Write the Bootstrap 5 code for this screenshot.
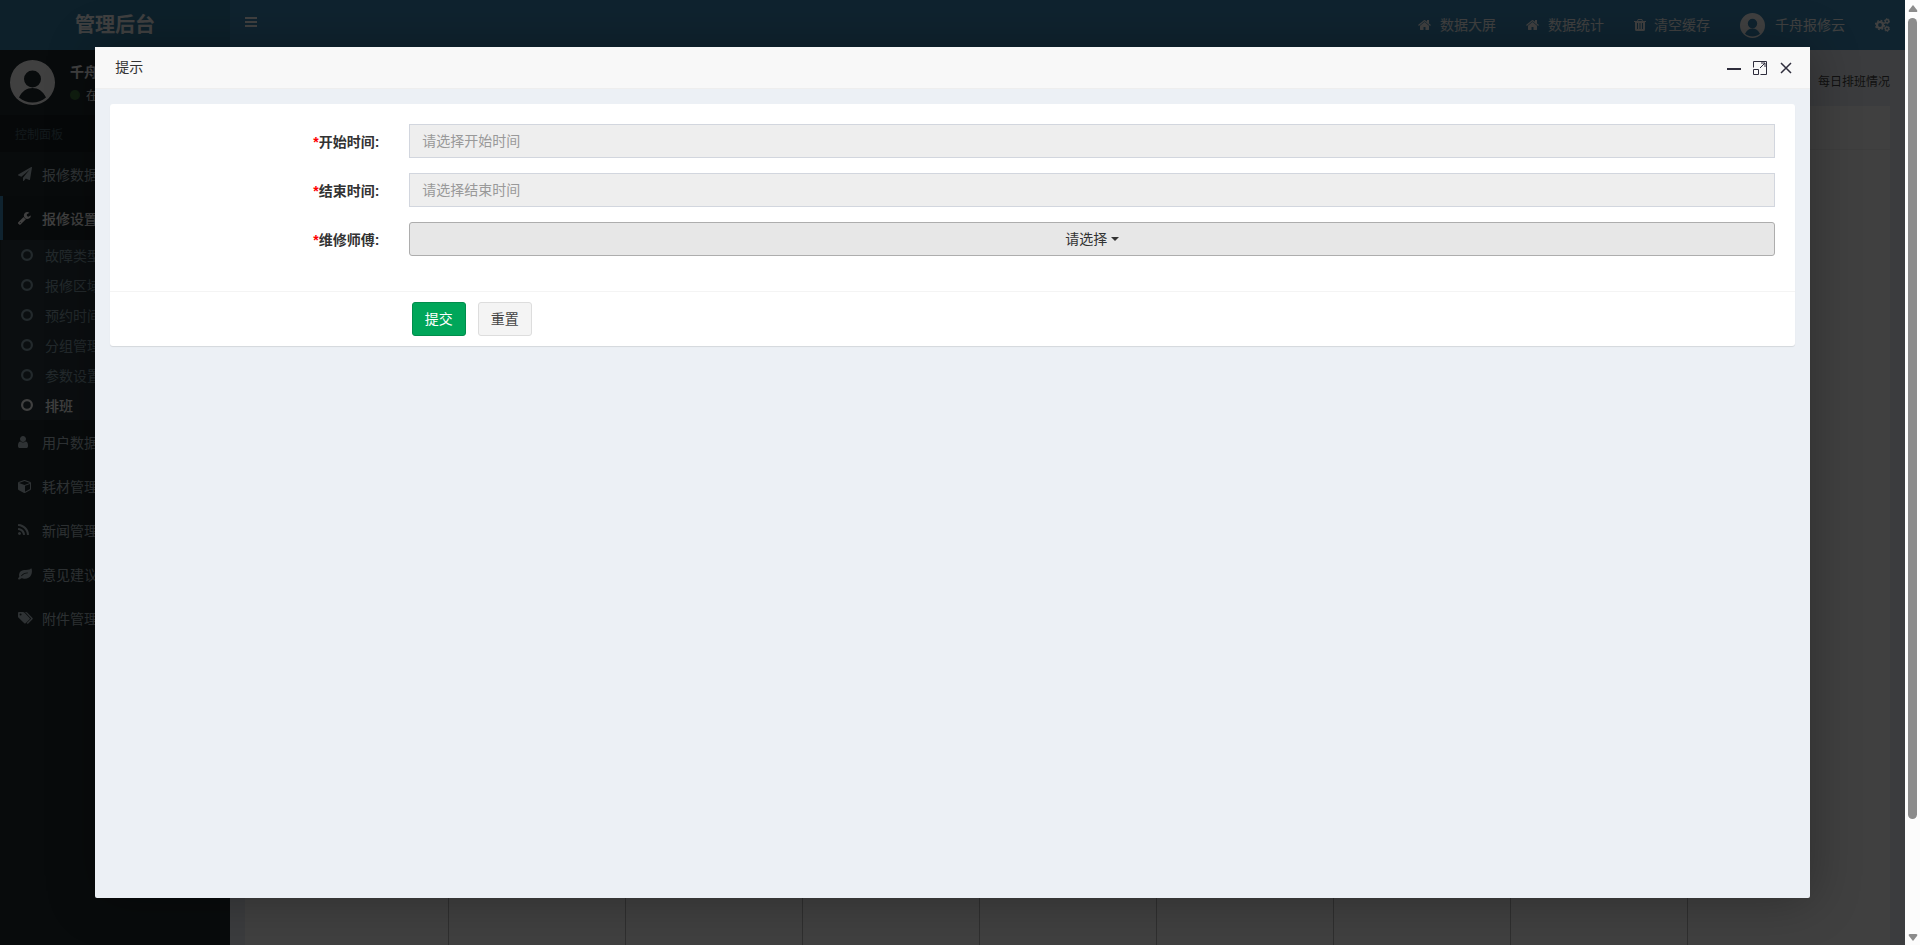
<!DOCTYPE html>
<html lang="zh-CN">
<head>
<meta charset="utf-8">
<meta name="viewport" content="width=device-width, initial-scale=1">
<title>管理后台</title>
<link href="https://cdn.jsdelivr.net/npm/bootstrap@5.3.0/dist/css/bootstrap.min.css" rel="stylesheet">
<style>
  body { font: 14px/20px "Liberation Sans", "Noto Sans CJK SC", sans-serif; color: #333; }
  a { text-decoration: none; color: inherit; }
  .ico { height: 14px; width: auto; fill: currentColor; display: block; flex: none; }

  /* top bar */
  .topbar { height: 50px; background: #3c8dbc; color: #fff; }
  .side-w { width: 230px; flex: none; }
  .brand { background: #367fa9; font-size: 20px; font-weight: 700; }
  .burger { padding: 0 15px 2px; border: 0; background: none; color: #fff; }
  .topbar .item { padding: 0 15px; gap: 8px; }
  .topbar .item.who { gap: 10px; }

  /* sidebar */
  .sidebar { background: #222d32; color: #b8c7ce; font-family: "Noto Sans CJK SC", sans-serif; }
  .who-panel { padding: 10px; gap: 15px; height: 65px; color: #fff; }
  .who-panel small { font-size: 12px; line-height: 18px; gap: 6px; }
  .online { width: 10px; height: 10px; border-radius: 50%; background: #3c763d; }
  .side-title { background: #1a2226; color: #4b646f; font-size: 12px; line-height: 17px; padding: 10px 15px; }
  .menu a { padding: 12px 0 12px 15px; border-left: 3px solid transparent; white-space: nowrap; }
  .menu .cell { width: 24px; flex: none; }
  .menu a.on { background: #1e282c; border-color: #3c8dbc; color: #fff; font-weight: 500; }
  .submenu { background: #2c3b41; margin: 0 1px; padding-left: 5px; color: #8aa4af; }
  .submenu a { padding: 5px 0 5px 15px; border: 0; }
  .submenu a.here { color: #fff; font-weight: 500; }

  /* page behind the dialog */
  .page { background: #ecf0f5; padding: 0 15px; }
  .crumb { height: 56px; padding-top: 26px; font-size: 12px; color: #444; }
  .sheet { background: #fff; }
  .sheet-head { height: 44px; border-bottom: 1px solid #f4f4f4; }
  .days { padding: 0 26px 0 27px; }
  .days div + div { border-left: 1px solid #bbb; }

  /* dialog */
  .shade { background: rgba(0,0,0,.75); }
  .dialog-box { width: 90%; height: 90%; background: #ecf0f5; box-shadow: 1px 1px 50px rgba(0,0,0,.3); border-radius: 2px; }
  .dialog-bar { height: 42px; background: #f8f8f8; border-bottom: 1px solid #eee; padding: 0 17px 1px 20px; }
  .dialog-bar button { padding: 0; border: 0; background: none; color: #2e2d3c; }
  .dialog-bar svg { display: block; }
  .panel-box { margin: 15px; background: #fff; border-radius: 3px; box-shadow: 0 1px 1px rgba(0,0,0,.1); }
  .panel-body { padding: 20px; }
  .panel-body .row { --bs-gutter-x: 30px; margin-bottom: 15px; }
  .panel-foot { border-top: 1px solid #f4f4f4; padding: 10px 19px; }
  .field-name { font-weight: 700; text-align: right; padding-top: 8px; }
  .field-name i { color: red; font-style: normal; }
  .form-control, .form-control:focus { height: 34px; padding: 6px 12px; font-size: 14px; line-height: 20px; border: 1px solid #d2d6de; border-radius: 0; background: #eee; box-shadow: none; }
  .form-control::placeholder { color: #999; }
  .btn { height: 34px; padding: 6px 12px; font-size: 14px; line-height: 20px; border-radius: 3px; }
  .btn-pick, .btn-pick:hover { background: #e7e7e7; border-color: #adadad; color: #333; }
  .btn-ok, .btn-ok:hover { background: #00a65a; border-color: #008d4c; color: #fff; }
  .btn-plain, .btn-plain:hover { background: #f4f4f4; border-color: #ddd; color: #444; }

  /* scroll strip */
  .strip { width: 15px; flex: none; background: #fcfcfc; color: #8b8b8b; padding: 5px 0 4px; gap: 6px; }
  .strip svg { fill: currentColor; }
  .strip-track { width: 9px; }
  .strip-thumb { height: 88%; background: #8b8b8b; border-radius: 5px; }
</style>
</head>
<body class="d-flex vh-100 overflow-hidden">

<svg width="0" height="0" class="position-absolute">
  <symbol id="home" viewBox="0 0 1664 1792"><path d="M1408 992v480q0 26-19 45t-45 19H960v-384H704v384H320q-26 0-45-19t-19-45V992q0-1 .5-3t.5-3l575-474 575 474q1 2 1 6zm223-69l-62 74q-8 9-21 11h-3q-13 0-21-7L832 424l-692 577q-12 8-24 7-13-2-21-11l-62-74q-8-10-7-23.500t11-21.500l719-599q32-26 76-26t76 26l244 204V288q0-14 9-23t23-9h192q14 0 23 9t9 23v408l219 182q10 8 11 21.500t-7 23.500z"/></symbol>
  <symbol id="ring" viewBox="0 0 12 14"><circle cx="6" cy="7" r="4.900" fill="none" stroke="currentColor" stroke-width="2.200"/></symbol>
  <symbol id="face" viewBox="0 0 45 45"><path fill-rule="evenodd" d="M22.500 0a22.500 22.500 0 1 0 0 45a22.500 22.500 0 1 0 0-45zM22.500 10.500a8.500 8.500 0 1 1 0 17a8.500 8.500 0 1 1 0-17zM9 37.500C12 31 17 28 22.500 28S33 31 36 37.500C32 41 27.500 42.500 22.500 42.500S13 41 9 37.500z"/></symbol>
</svg>

<div class="position-relative d-flex flex-column flex-grow-1 overflow-hidden">

  <header class="topbar d-flex flex-shrink-0">
    <a href="#" class="brand side-w d-flex align-items-center justify-content-center">管理后台</a>
    <button class="burger d-flex align-items-center" aria-label="菜单"><svg class="ico" viewBox="0 0 12 14"><path d="M0 0h12v2H0zM0 4h12v2H0zM0 8h12v2H0z"/></svg></button>
    <nav class="d-flex ms-auto">
      <a href="#" class="item d-flex align-items-center"><svg class="ico" viewBox="0 0 14 14"><use href="#home" width="13" height="14"/></svg>数据大屏</a>
      <a href="#" class="item d-flex align-items-center"><svg class="ico" viewBox="0 0 14 14"><use href="#home" width="13" height="14"/></svg>数据统计</a>
      <a href="#" class="item d-flex align-items-center"><svg class="ico" viewBox="0 0 12 14"><path fill-rule="evenodd" d="M4 1h4l1 2h3v1h-1v7.500a1.500 1.500 0 0 1-1.500 1.500h-7A1.500 1.500 0 0 1 1 11.500V4H0V3h3zM4.500 2L4 3h4l-.5-1zM3 5v6h1V5zm2.500 0v6h1V5zM8 5v6h1V5z"/></svg>清空缓存</a>
      <a href="#" class="item who d-flex align-items-center"><svg width="25" height="25" fill="currentColor"><use href="#face"/></svg>千舟报修云</a>
      <a href="#" class="item d-flex align-items-center" aria-label="设置"><svg class="ico" viewBox="0 0 15 14"><g fill="none" stroke="currentColor"><circle cx="5" cy="7" r="3" stroke-width="2.200"/><circle cx="5" cy="7" r="4.500" stroke-width="1.400" stroke-dasharray="1.770 1.770"/><circle cx="12" cy="3.200" r="1.700" stroke-width="1.500"/><circle cx="12" cy="3.200" r="2.600" stroke-dasharray="1.360 1.360"/><circle cx="12" cy="10.800" r="1.700" stroke-width="1.500"/><circle cx="12" cy="10.800" r="2.600" stroke-dasharray="1.360 1.360"/></g></svg></a>
    </nav>
  </header>

  <div class="d-flex flex-grow-1">
    <aside class="sidebar side-w">
      <div class="who-panel d-flex">
        <svg width="45" height="45" fill="currentColor"><use href="#face"/></svg>
        <div>
          <div class="fw-bold mb-1 pt-1 lh-1">千舟报修云</div>
          <small class="d-flex align-items-center pt-1"><span class="online"></span>在线</small>
        </div>
      </div>
      <div class="side-title">控制面板</div>
      <nav class="menu">
        <a href="#" class="d-flex align-items-center"><span class="cell"><svg class="ico" viewBox="0 0 1792 1792"><path d="M1764 11q33 24 27 64l-256 1536q-5 29-32 45-14 8-31 8-11 0-24-5l-453-185-242 295q-18 23-49 23-13 0-22-4-19-7-30.500-23.500T640 1728v-349l864-1059-1069 925-395-162q-37-14-40-55-2-40 32-59L1696 9q15-9 32-9 20 0 36 11z"/></svg></span>报修数据</a>
        <a href="#" class="on d-flex align-items-center"><span class="cell"><svg class="ico" viewBox="85 0 1792 1792"><path fill-rule="evenodd" d="M448 1472q0-26-19-45t-45-19-45 19-19 45 19 45 45 19 45-19 19-45zm644-420l-682 682q-37 37-90 37-52 0-91-37L123 1626q-38-36-38-90 0-53 38-91l681-681q39 98 114.500 173.500T1092 1052zm634-435q0 39-23 106-47 134-164.500 217.500T1280 1024q-185 0-316.500-131.500T832 576t131.500-316.500T1280 128q58 0 121.500 16.500T1509 191q16 11 16 28t-16 28l-293 169v224l193 107q5-3 79-48.500t135.500-81T1694 582q15 0 23.500 10t8.500 25z"/></svg></span>报修设置</a>
        <div class="submenu">
          <a href="#" class="d-flex align-items-center"><span class="cell"><svg class="ico" viewBox="0 0 12 14"><use href="#ring"/></svg></span>故障类型</a>
          <a href="#" class="d-flex align-items-center"><span class="cell"><svg class="ico" viewBox="0 0 12 14"><use href="#ring"/></svg></span>报修区域</a>
          <a href="#" class="d-flex align-items-center"><span class="cell"><svg class="ico" viewBox="0 0 12 14"><use href="#ring"/></svg></span>预约时间</a>
          <a href="#" class="d-flex align-items-center"><span class="cell"><svg class="ico" viewBox="0 0 12 14"><use href="#ring"/></svg></span>分组管理</a>
          <a href="#" class="d-flex align-items-center"><span class="cell"><svg class="ico" viewBox="0 0 12 14"><use href="#ring"/></svg></span>参数设置</a>
          <a href="#" class="here d-flex align-items-center"><span class="cell"><svg class="ico" viewBox="0 0 12 14"><use href="#ring"/></svg></span>排班</a>
        </div>
        <a href="#" class="d-flex align-items-center"><span class="cell"><svg class="ico" viewBox="256 0 1280 1792"><path d="M1536 1399q0 109-62.500 187t-150.500 78H469q-88 0-150.500-78T256 1399q0-85 8.500-160.500t31.500-152 58.500-131 94-89T583 832q131 128 313 128t313-128q76 0 134.500 34.500t94 89 58.500 131 31.500 152 8.500 160.500zm-256-887q0 159-112.500 271.500T896 896 624.500 783.500 512 512t112.500-271.500T896 128t271.500 112.500T1280 512z"/></svg></span>用户数据</a>
        <a href="#" class="d-flex align-items-center"><span class="cell"><svg class="ico" viewBox="0 0 1664 1792"><path fill-rule="evenodd" d="M896 1629l640-349V644l-640 233v752zm-64-865l698-254-698-254-698 254zM1664 512v768q0 35-18 65t-49 47l-704 384q-28 16-61 16t-61-16L67 1392q-31-17-49-47t-18-65V512q0-40 23-73t61-47l704-256q22-8 44-8t44 8l704 256q38 14 61 47t23 73z"/></svg></span>耗材管理</a>
        <a href="#" class="d-flex align-items-center"><span class="cell"><svg class="ico" viewBox="0 0 1408 1792"><path d="M384 1344q0 80-56 136t-136 56-136-56-56-136 56-136 136-56 136 56 56 136zm512 123q2 28-17 48-18 21-47 21H697q-25 0-43-16.500t-20-41.500q-22-229-184.500-391.500T58 902q-25-2-41.500-20T0 839V704q0-29 21-47 17-17 43-17h5q160 13 306 80.500T634 902q114 113 181.500 259t80.500 306zm512 2q2 27-18 47-18 20-46 20h-143q-26 0-44.500-17.500T1137 1476q-12-215-101-408.500t-231.500-336-336-231.500T60 398q-25-1-42.500-19.500T0 335V192q0-28 20-46 18-18 44-18h3q262 13 501.500 120T994 542q187 186 294 425.500t120 501.500z"/></svg></span>新闻管理</a>
        <a href="#" class="d-flex align-items-center"><span class="cell"><svg class="ico" viewBox="0 0 14 14"><path fill-rule="evenodd" d="M13.500 1.500c.7 2 .6 4.500-.4 6.500-1.200 2.500-3.600 3.800-6.200 3.800-1.400 0-2.400-.6-3.400-.6-.9 0-1.400 1.300-2.200 1.300-.7 0-1.200-.6-1.200-1.100 0-.8 1.200-1.500 1.200-2C1 8.500 1 8 1.100 7.300 1.400 4.800 3.600 3.400 6 3.100c2.500-.3 5.300.2 7-1.600zM3.500 9.200C5.500 7.200 7 6.500 9.800 6.300V5.500C7 5.600 5 6.600 3 8.700z"/></svg></span>意见建议</a>
        <a href="#" class="d-flex align-items-center"><span class="cell"><svg class="ico" viewBox="0 0 15 14"><path fill-rule="evenodd" d="M0 2a1 1 0 0 1 1-1h4q.7 0 1.300.6l5.300 5.300q.6.6 0 1.300l-4 4q-.7.600-1.300 0L.6 6.800Q0 6.200 0 5.500zM2.600 2.500a1 1 0 1 0 0 2a1 1 0 1 0 0-2zM7 1h.9q.7 0 1.300.6l5.300 5.300q.6.6 0 1.300l-4.200 4.200q-.7.500-1.200 0l-.4-.4 4-4q.5-.5 0-1.100z"/></svg></span>附件管理</a>
      </nav>
    </aside>

    <main class="page d-flex flex-column flex-grow-1">
      <div class="crumb text-end lh-1">每日排班情况</div>
      <div class="sheet d-flex flex-column flex-grow-1">
        <div class="sheet-head"></div>
        <div class="days d-flex flex-grow-1">
          <div class="col"></div><div class="col"></div><div class="col"></div><div class="col"></div><div class="col"></div><div class="col"></div><div class="col"></div><div class="col"></div><div class="col"></div>
        </div>
      </div>
    </main>
  </div>

  <div class="shade position-absolute top-0 start-0 w-100 h-100 d-flex align-items-center justify-content-center">
    <section class="dialog-box" role="dialog" aria-label="提示">
      <div class="dialog-bar d-flex align-items-center">
        <span class="me-auto">提示</span>
        <div class="d-flex align-items-center gap-2">
          <button aria-label="最小化"><svg width="18" height="16"><path fill="currentColor" d="M0 9h14v2H0z"/></svg></button>
          <button aria-label="最大化"><svg width="18" height="16" viewBox="0 0 18 16" fill="none" stroke="currentColor"><path d="M.5 8.500v-6h13v13h-6M.5 10.500h5v5h-5zM7 9l5-5M8 4h4v4"/></svg></button>
          <button aria-label="关闭"><svg width="14" height="16" fill="none" stroke="currentColor" stroke-width="1.500"><path d="M2 4l10 10M12 4L2 14"/></svg></button>
        </div>
      </div>

      <form class="panel-box">
        <div class="panel-body">
          <div class="row">
            <label class="col-2 field-name" for="begin"><i>*</i>开始时间:</label>
            <div class="col-10"><input id="begin" class="form-control" placeholder="请选择开始时间" readonly></div>
          </div>
          <div class="row">
            <label class="col-2 field-name" for="finish"><i>*</i>结束时间:</label>
            <div class="col-10"><input id="finish" class="form-control" placeholder="请选择结束时间" readonly></div>
          </div>
          <div class="row">
            <label class="col-2 field-name" for="worker"><i>*</i>维修师傅:</label>
            <div class="col-10"><button id="worker" type="button" class="btn btn-pick dropdown-toggle w-100" data-bs-toggle="dropdown">请选择</button></div>
          </div>
        </div>
        <div class="panel-foot">
          <div class="d-flex gap-2">
            <div class="col-2"></div>
            <button type="submit" class="btn btn-ok me-1">提交</button>
            <button type="reset" class="btn btn-plain">重置</button>
          </div>
        </div>
      </form>
    </section>
  </div>
</div>

<div class="strip d-flex flex-column align-items-center" aria-hidden="true">
  <svg width="10" height="7"><path d="M5 0l4 5q1 2-1 2H2Q0 7 1 5z"/></svg>
  <div class="strip-track flex-grow-1"><div class="strip-thumb"></div></div>
  <svg width="10" height="7"><path d="M5 7l4-5q1-2-1-2H2Q0 0 1 2z"/></svg>
</div>

<script src="https://cdn.jsdelivr.net/npm/bootstrap@5.3.0/dist/js/bootstrap.bundle.min.js"></script>
</body>
</html>
